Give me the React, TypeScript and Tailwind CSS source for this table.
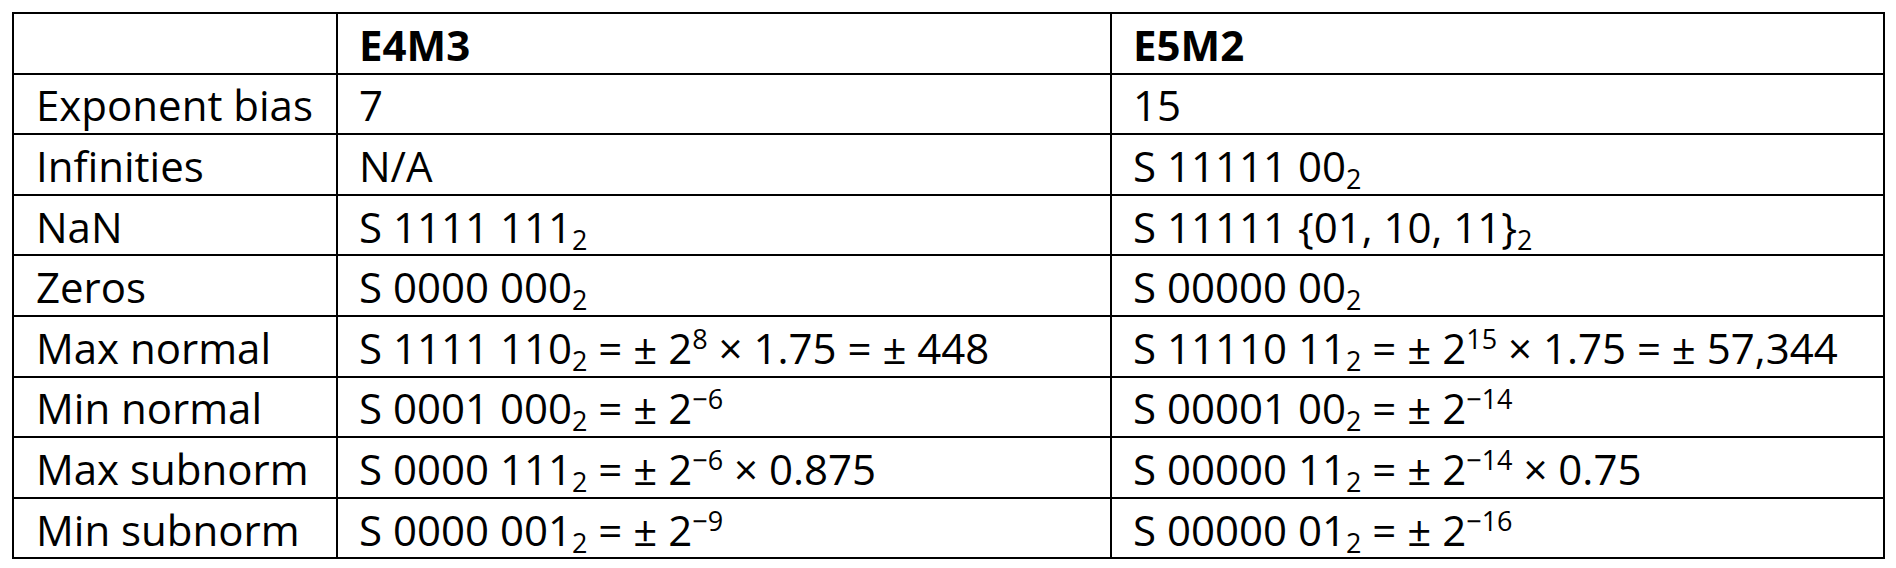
const font = { fontFamily: '"Open Sans", "Noto Sans", sans-serif' };

type Cell = React.ReactNode;

function Sub({ children }: { children: React.ReactNode }) {
  return <span className="relative top-[7px] text-[27px] leading-none">{children}</span>;
}

function Sup({ children }: { children: React.ReactNode }) {
  return <span className="relative -top-[15px] text-[27px] leading-none">{children}</span>;
}

const rows: Array<[string, Cell, Cell]> = [
  ["Exponent bias", "7", "15"],
  ["Infinities", "N/A", <>S 11111 00<Sub>2</Sub></>],
  ["NaN", <>S 1111 111<Sub>2</Sub></>, <>S 11111 {"{01, 10, 11}"}<Sub>2</Sub></>],
  ["Zeros", <>S 0000 000<Sub>2</Sub></>, <>S 00000 00<Sub>2</Sub></>],
  [
    "Max normal",
    <>S 1111 110<Sub>2</Sub> = ± 2<Sup>8</Sup> × 1.75 = ± 448</>,
    <>S 11110 11<Sub>2</Sub> = ± 2<Sup>15</Sup> × 1.75 = ± 57,344</>,
  ],
  [
    "Min normal",
    <>S 0001 000<Sub>2</Sub> = ± 2<Sup>−6</Sup></>,
    <>S 00001 00<Sub>2</Sub> = ± 2<Sup>−14</Sup></>,
  ],
  [
    "Max subnorm",
    <>S 0000 111<Sub>2</Sub> = ± 2<Sup>−6</Sup> × 0.875</>,
    <>S 00000 11<Sub>2</Sub> = ± 2<Sup>−14</Sup> × 0.75</>,
  ],
  [
    "Min subnorm",
    <>S 0000 001<Sub>2</Sub> = ± 2<Sup>−9</Sup></>,
    <>S 00000 01<Sub>2</Sub> = ± 2<Sup>−16</Sup></>,
  ],
];

export default function App() {
  return (
    <div className="h-[568px] w-[1896px] bg-white pl-[12px] pt-[12px] text-black" style={font}>
      <table className="w-[1871px] table-fixed border-collapse text-[42px] leading-none">
        <colgroup>
          <col className="w-[324px]" />
          <col className="w-[774px]" />
          <col className="w-[773px]" />
        </colgroup>
        <thead>
          <tr className="h-[60.6px]">
            <th className="border-2 border-black" />
            <th className="border-2 border-black pt-[3px] pl-[21px] text-left font-bold">E4M3</th>
            <th className="border-2 border-black pt-[3px] pl-[21px] text-left font-bold">E5M2</th>
          </tr>
        </thead>
        <tbody>
          {rows.map(([label, a, b]) => (
            <tr key={label} className="h-[60.6px]">
              <td className="whitespace-nowrap border-2 border-black pt-[3px] pl-[22px]">{label}</td>
              <td className="whitespace-nowrap border-2 border-black pt-[3px] pl-[21px]">{a}</td>
              <td className="whitespace-nowrap border-2 border-black pt-[3px] pl-[21px]">{b}</td>
            </tr>
          ))}
        </tbody>
      </table>
    </div>
  );
}
